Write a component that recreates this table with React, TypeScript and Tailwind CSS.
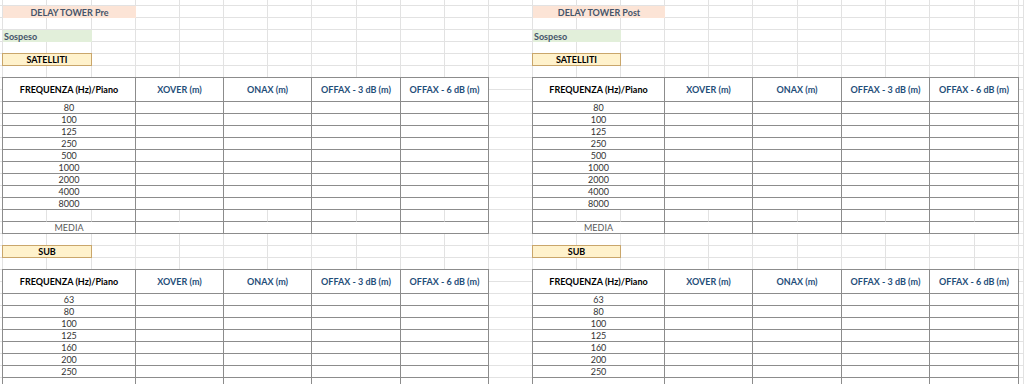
const DARK = 'border-[#8c8c8c]'
const LEFT_COLS = 'grid-cols-[44px_45px_44px_44px_44px_44px_44px_45px_44px_44px_44px]'
const RIGHT_COLS = 'grid-cols-[44px_44px_44px_44px_44px_45px_44px_44px_44px_45px_44px]'

const headers = ['XOVER (m)', 'ONAX (m)', 'OFFAX - 3 dB (m)', 'OFFAX - 6 dB (m)']
const satFreqs = ['80', '100', '125', '250', '500', '1000', '2000', '4000', '8000']
const subFreqs = ['63', '80', '100', '125', '160', '200', '250', '']
// which of the 11 sheet columns end on a table column edge
const colEdges = [false, false, true, false, true, false, true, false, true, false, true]

function Row({ label, muted }: { label: string; muted?: boolean }) {
  return (
    <>
      <div className={`col-span-3 flex items-center justify-center border-r border-b ${DARK} ${muted ? 'text-[#595959]' : 'text-[#333333]'}`}>
        {label}
      </div>
      {headers.map((h) => (
        <div key={h} className={`col-span-2 border-r border-b ${DARK}`} />
      ))}
    </>
  )
}

function MeasureTable({ cols, freqs, media }: { cols: string; freqs: string[]; media?: boolean }) {
  return (
    <div className={`-ml-px -mt-px grid grid-rows-[24px] auto-rows-[12px] border-l border-t bg-white ${DARK} ${cols}`}>
      <div className={`col-span-3 flex items-center justify-center border-r border-b font-bold text-black ${DARK}`}>
        FREQUENZA (Hz)/Piano
      </div>
      {headers.map((h) => (
        <div key={h} className={`col-span-2 flex items-center justify-center border-r border-b font-bold text-[#1f4e79] ${DARK}`}>
          {h}
        </div>
      ))}
      {freqs.map((f, i) => (
        <Row key={i} label={f} />
      ))}
      {media && (
        <>
          {colEdges.map((edge, i) => (
            <div key={i} className={`border-b border-r ${edge ? 'border-r-[#8c8c8c]' : 'border-r-[#e2e2e2]'} border-b-[#8c8c8c]`} />
          ))}
          <Row label="MEDIA" muted />
        </>
      )}
    </div>
  )
}

function Half({ side }: { side: 'pre' | 'post' }) {
  const left = side === 'pre'
  return (
    <>
      <div className={`${left ? 'col-start-2' : 'col-start-14'} col-span-3 row-start-2 flex items-center justify-center bg-[#fce4d6] font-bold text-[#44546a]`}>
        {left ? 'DELAY TOWER Pre' : 'DELAY TOWER Post'}
      </div>
      <div className={`${left ? 'col-start-2' : 'col-start-14'} col-span-2 row-start-4 flex items-center bg-[#e2efda] pl-px font-bold text-[#44546a]`}>
        Sospeso
      </div>
      <div className={`${left ? 'col-start-2' : 'col-start-14'} col-span-2 row-start-6 -ml-px -mt-px flex items-center justify-center border border-[#c9a66b] bg-[#fff2cc] font-bold text-black`}>
        SATELLITI
      </div>
      <div className={`${left ? 'col-start-2' : 'col-start-14'} col-span-11 row-start-8 row-span-13 flex`}>
        <div className="flex-1">
          <MeasureTable cols={left ? LEFT_COLS : RIGHT_COLS} freqs={satFreqs} media />
        </div>
      </div>
      <div className={`${left ? 'col-start-2' : 'col-start-14'} col-span-2 row-start-22 -ml-px -mt-px flex items-center justify-center border border-[#c9a66b] bg-[#fff2cc] font-bold text-black`}>
        SUB
      </div>
      <div className={`${left ? 'col-start-2' : 'col-start-14'} col-span-11 row-start-24 row-span-10 flex`}>
        <div className="flex-1">
          <MeasureTable cols={left ? LEFT_COLS : RIGHT_COLS} freqs={subFreqs} />
        </div>
      </div>
    </>
  )
}

export default function App() {
  return (
    <div className="h-[384px] w-[1024px] overflow-hidden bg-white font-['Lato','Liberation_Sans',sans-serif] text-[9px] leading-none">
      <div className="grid grid-cols-[3px_44px_45px_44px_44px_44px_44px_44px_45px_44px_44px_44px_44px_44px_44px_44px_44px_44px_45px_44px_44px_44px_45px_44px_1fr] grid-rows-[6px_repeat(32,12px)] auto-rows-[12px]">
        {Array.from({ length: 25 * 33 }).map((_, i) => (
          <div key={i} className="border-r border-b border-[#e2e2e2]" />
        ))}
        <Half side="pre" />
        <Half side="post" />
      </div>
    </div>
  )
}
